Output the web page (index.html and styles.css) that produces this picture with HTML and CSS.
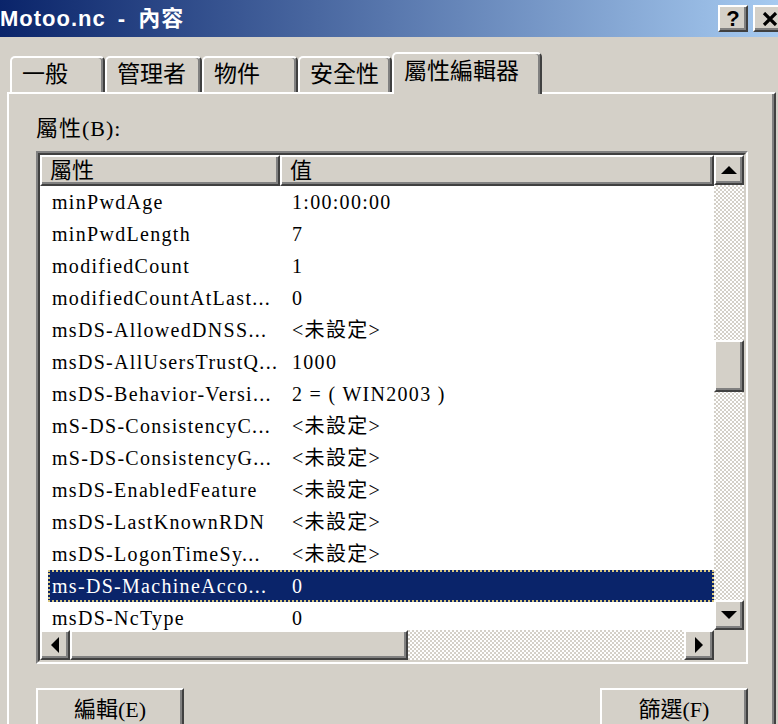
FILE: index.html
```html
<!DOCTYPE html>
<html lang="zh-Hant">
<head>
<meta charset="utf-8">
<title>Motoo.nc - 內容</title>
<link rel="stylesheet" href="styles.css">
</head>
<body>
<div class="window">
  <div class="titlebar">
    <span class="title">Motoo.nc - 內容</span>
    <span class="cbtn help">?</span>
    <span class="cbtn close"><svg width="16" height="14" viewBox="0 0 16 14"><path d="M2 1 L14 13 M14 1 L2 13" stroke="#000" stroke-width="3.2" fill="none"/></svg></span>
  </div>
  <div class="tabs">
    <div class="tab t1">一般</div>
    <div class="tab t2">管理者</div>
    <div class="tab t3">物件</div>
    <div class="tab t4">安全性</div>
    <div class="tab active">屬性編輯器</div>
  </div>
  <div class="panel">
    <div class="label">屬性(B):</div>
    <div class="listbox">
      <div class="lb-inner">
        <div class="lb-top">
          <div class="list">
            <div class="header">
              <div class="hcell c1">屬性</div>
              <div class="hcell c2">值</div>
            </div>
            <div class="row"><span class="n">minPwdAge</span><span class="v">1:00:00:00</span></div>
            <div class="row"><span class="n">minPwdLength</span><span class="v">7</span></div>
            <div class="row"><span class="n">modifiedCount</span><span class="v">1</span></div>
            <div class="row"><span class="n">modifiedCountAtLast...</span><span class="v">0</span></div>
            <div class="row"><span class="n">msDS-AllowedDNSS...</span><span class="v">&lt;未設定&gt;</span></div>
            <div class="row"><span class="n">msDS-AllUsersTrustQ...</span><span class="v">1000</span></div>
            <div class="row"><span class="n">msDS-Behavior-Versi...</span><span class="v">2 = ( WIN2003 )</span></div>
            <div class="row"><span class="n">mS-DS-ConsistencyC...</span><span class="v">&lt;未設定&gt;</span></div>
            <div class="row"><span class="n">mS-DS-ConsistencyG...</span><span class="v">&lt;未設定&gt;</span></div>
            <div class="row"><span class="n">msDS-EnabledFeature</span><span class="v">&lt;未設定&gt;</span></div>
            <div class="row"><span class="n">msDS-LastKnownRDN</span><span class="v">&lt;未設定&gt;</span></div>
            <div class="row"><span class="n">msDS-LogonTimeSy...</span><span class="v">&lt;未設定&gt;</span></div>
            <div class="row sel"><span class="n">ms-DS-MachineAcco...</span><span class="v">0</span></div>
            <div class="row"><span class="n">msDS-NcType</span><span class="v">0</span></div>
          </div>
          <div class="vscroll">
            <div class="sbtn"><svg width="16" height="8" viewBox="0 0 16 8"><polygon points="8,0 16,8 0,8" fill="#000"/></svg></div>
            <div class="vtrack"><div class="vthumb"></div></div>
            <div class="sbtn"><svg width="16" height="8" viewBox="0 0 16 8"><polygon points="0,0 16,0 8,8" fill="#000"/></svg></div>
          </div>
        </div>
        <div class="lb-bottom">
          <div class="hscroll">
            <div class="sbtn"><svg width="8" height="16" viewBox="0 0 8 16"><polygon points="8,0 8,16 0,8" fill="#000"/></svg></div>
            <div class="hthumb"></div>
            <div class="htrack"></div>
            <div class="sbtn"><svg width="8" height="16" viewBox="0 0 8 16"><polygon points="0,0 8,8 0,16" fill="#000"/></svg></div>
          </div>
          <div class="corner"></div>
        </div>
      </div>
    </div>
    <div class="buttons">
      <div class="btn">編輯(E)</div>
      <div class="btn">篩選(F)</div>
    </div>
  </div>
</div>
</body>
</html>
```
FILE: styles.css
```css
* { box-sizing: border-box; }
html, body { margin: 0; padding: 0; }
body {
  width: 778px;
  height: 724px;
  overflow: hidden;
  background: #d4d0c8;
  color: #000;
  font-family: "Liberation Serif", "Noto Sans CJK TC", serif;
}
.window {
  width: 778px;
  height: 724px;
  overflow: hidden;
  background: #d4d0c8;
}

/* title bar */
.titlebar {
  display: flex;
  align-items: center;
  height: 37px;
  overflow: hidden;
  background: linear-gradient(to right, #0a246a, #a6caf0);
}
.title {
  flex: none;
  width: 718px;
  color: #fff;
  font: bold 22px/37px "Liberation Sans", "Noto Sans CJK TC", sans-serif;
  letter-spacing: 1px;
  word-spacing: 5px;
  white-space: nowrap;
}
.cbtn {
  flex: none;
  width: 30px;
  height: 27px;
  display: flex;
  align-items: center;
  justify-content: center;
  background: #d4d0c8;
  border: 2px solid;
  border-color: #fff #404040 #404040 #fff;
  box-shadow: inset -2px -2px #808080;
  font: bold 22px/1 "Liberation Sans", sans-serif;
  color: #000;
}
.close { width: 34px; margin-left: 5px; }

/* tabs */
.tabs {
  display: flex;
  align-items: flex-end;
  height: 55px;
  padding-left: 10px;
}
.tab {
  flex: none;
  height: 36px;
  padding-left: 10px;
  border: 2px solid;
  border-bottom: none;
  border-color: #fff #404040 transparent #fff;
  border-radius: 5px 5px 0 0;
  box-shadow: inset -2px 0 #808080;
  font-size: 23px;
  line-height: 34px;
  white-space: nowrap;
  background: #d4d0c8;
}
.t1 { width: 95px; }
.t2 { width: 97px; }
.t3 { width: 96px; }
.t4 { width: 94px; }
.tab.active {
  width: 150px;
  height: 42px;
  line-height: 36px;
  margin-bottom: -2px;
  position: relative;
  z-index: 1;
}

/* panel */
.panel {
  margin-left: 7px;
  width: 769px;
  height: 632px;
  border-top: 2px solid #fff;
  border-left: 2px solid #fff;
  border-right: 2px solid #404040;
  box-shadow: inset -2px 0 #808080;
  padding: 23px 0 0 27px;
}
.label {
  font-size: 22px;
  line-height: 24px;
  height: 24px;
  margin-bottom: 10px;
  letter-spacing: 1px;
  white-space: nowrap;
}

/* list box */
.listbox {
  width: 712px;
  height: 513px;
  border: 2px solid;
  border-color: #808080 #fff #fff #808080;
}
.lb-inner {
  height: 100%;
  border: 2px solid;
  border-color: #404040 #d4d0c8 #d4d0c8 #404040;
  display: flex;
  flex-direction: column;
}
.lb-top {
  display: flex;
  height: 475px;
}
.list {
  width: 674px;
  background: #fff;
  overflow: hidden;
}
.header {
  display: flex;
  height: 31px;
  background: #d4d0c8;
}
.hcell {
  height: 31px;
  padding-left: 8px;
  border: 2px solid;
  border-color: #fff #404040 #404040 #fff;
  box-shadow: inset -2px -2px #808080;
  font-size: 22px;
  line-height: 27px;
  white-space: nowrap;
}
.hcell.c1 { width: 240px; }
.hcell.c2 { flex: 1; }

.row {
  display: flex;
  height: 32px;
  margin-left: 8px;
  font-size: 20px;
  line-height: 32px;
  letter-spacing: 1.3px;
  white-space: nowrap;
}
.row .n { width: 232px; padding-left: 4px; overflow: hidden; }
.row .v { padding-left: 12px; }
.row.sel {
  background: #0a246a;
  color: #fff;
  border: 2px dotted #d8c67e;
  line-height: 28px;
}
.row.sel .n { width: 230px; padding-left: 2px; }

/* scrollbars */
.vscroll {
  width: 30px;
  display: flex;
  flex-direction: column;
  background: repeating-conic-gradient(#ffffff 0 25%, #d4d0c8 0 50%) 0 0 / 4px 4px;
}
.sbtn {
  flex: none;
  width: 30px;
  height: 30px;
  display: flex;
  align-items: center;
  justify-content: center;
  background: #d4d0c8;
  border: 2px solid;
  border-color: #fff #404040 #404040 #fff;
  box-shadow: inset -2px -2px #808080;
}
.vtrack {
  flex: 1;
  padding-top: 155px;
}
.vthumb {
  height: 52px;
  background: #d4d0c8;
  border: 2px solid;
  border-color: #fff #404040 #404040 #fff;
  box-shadow: inset -2px -2px #808080;
}
.lb-bottom {
  display: flex;
  height: 30px;
}
.hscroll {
  width: 674px;
  display: flex;
  background: repeating-conic-gradient(#ffffff 0 25%, #d4d0c8 0 50%) 0 0 / 4px 4px;
}
.hthumb {
  width: 338px;
  background: #d4d0c8;
  border: 2px solid;
  border-color: #fff #404040 #404040 #fff;
  box-shadow: inset -2px -2px #808080;
}
.htrack { flex: 1; }
.corner { flex: 1; background: #d4d0c8; }

/* buttons */
.buttons {
  display: flex;
  justify-content: space-between;
  width: 712px;
  margin-top: 24px;
}
.btn {
  width: 148px;
  height: 46px;
  border: 2px solid;
  border-color: #fff #404040 #404040 #fff;
  box-shadow: inset -2px -2px #808080;
  font-size: 22px;
  line-height: 40px;
  text-align: center;
  white-space: nowrap;
}
```
